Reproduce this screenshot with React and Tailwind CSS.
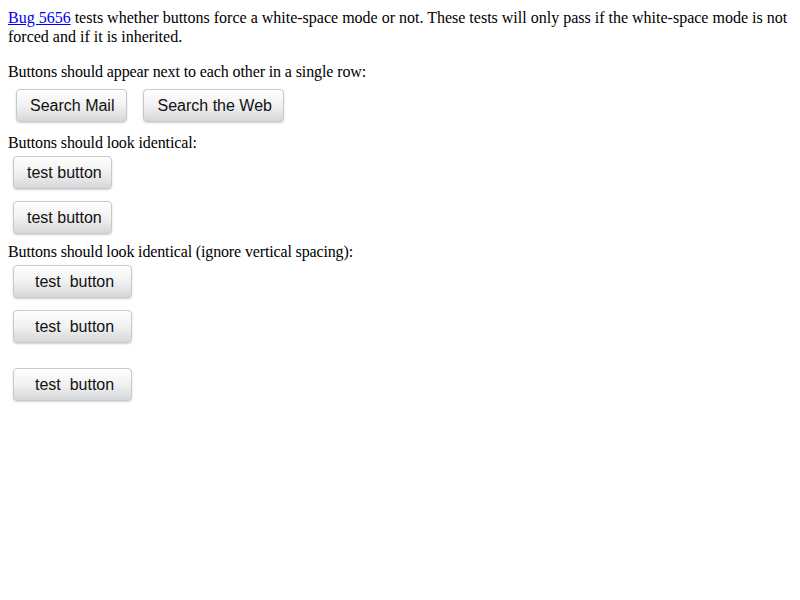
const btn =
  'h-[33px] pt-px rounded-[4px] border border-[#c9c9c9] bg-linear-to-b from-white via-[#f1f1f2] to-[#d6d7da] shadow-[0_1px_2px_rgba(0,0,0,0.18)] text-[16px] text-[#111] leading-none font-["Liberation_Sans",Arial,sans-serif] whitespace-pre';

export default function App() {
  return (
    <div className="p-2 text-[16px] leading-[19.2px] text-black font-['Liberation_Serif','Times_New_Roman',serif]">
      <p>
        <a href="#" className="text-[#0000ee] underline">Bug 5656</a> tests whether buttons force a
        white-space mode or not. These tests will only pass if the white-space mode is not forced and
        if it is inherited.
      </p>

      <p className="mt-4 tracking-[-0.11px]">Buttons should appear next to each other in a single row:</p>
      <div className="mt-[7px] ml-2 flex gap-4">
        <button className={btn + ' pl-[13px] pr-[12px]'}>Search Mail</button>
        <button className={btn + ' pl-[13px] pr-[11px]'}>Search the Web</button>
      </div>

      <p className="mt-[11px] tracking-[-0.12px]">Buttons should look identical:</p>
      <div className="mt-1 ml-[5px] flex flex-col items-start gap-3">
        <button className={btn + ' pl-[13px] pr-[9px]'}>test button</button>
        <button className={btn + ' pl-[13px] pr-[9px]'}>test button</button>
      </div>

      <p className="mt-2 tracking-[-0.14px]">Buttons should look identical (ignore vertical spacing):</p>
      <div className="mt-1 ml-[5px] flex flex-col items-start">
        <button className={btn + ' pl-[21px] pr-[17px]'}>test  button</button>
        <button className={btn + ' pl-[21px] pr-[17px] mt-3'}>test  button</button>
        <button className={btn + ' pl-[21px] pr-[17px] mt-[25px]'}>test  button</button>
      </div>
    </div>
  );
}
